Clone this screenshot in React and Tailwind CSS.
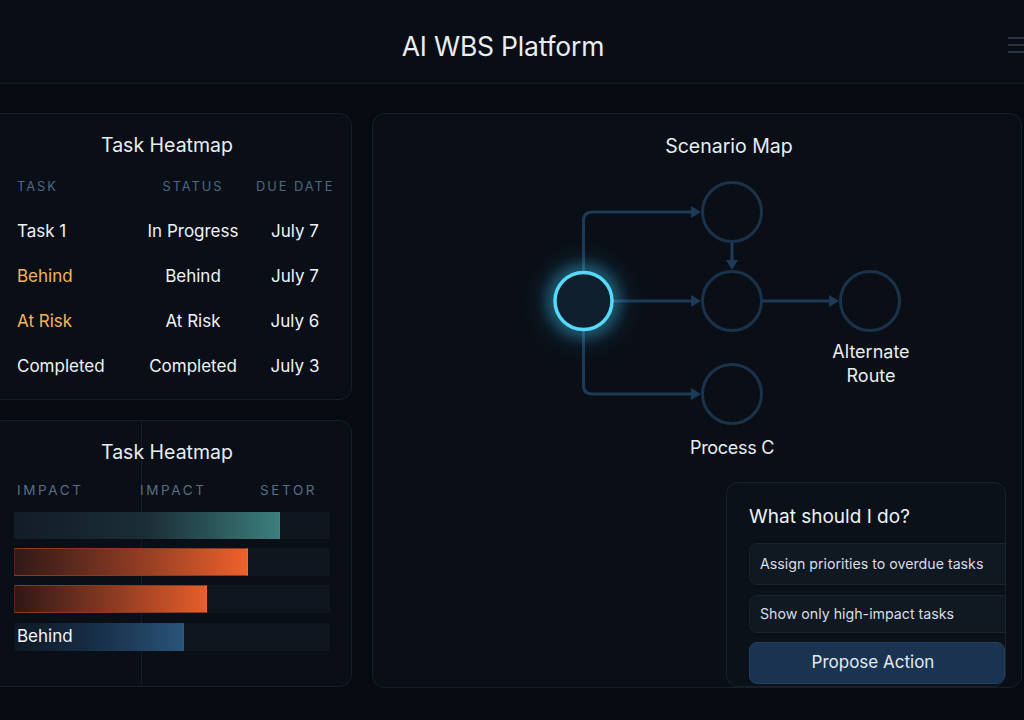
import React from 'react';

// Task table rows
const tasks = [
  { name: 'Task 1', status: 'In Progress', due: 'July 7', warn: false },
  { name: 'Behind', status: 'Behind', due: 'July 7', warn: true },
  { name: 'At Risk', status: 'At Risk', due: 'July 6', warn: true },
  { name: 'Completed', status: 'Completed', due: 'July 3', warn: false },
];

const Arrow = ({ x, y, dir = 'right' }) => {
  // tip located at (x, y)
  const pts =
    dir === 'right'
      ? `${x - 10},${y - 6} ${x - 10},${y + 6} ${x},${y}`
      : `${x - 6},${y - 10} ${x + 6},${y - 10} ${x},${y}`;
  return <polygon points={pts} fill="#1d3a57" />;
};

const ScenarioDiagram = () => (
  <svg width="650" height="322" viewBox="0 0 650 322" className="absolute left-0 top-0">
    <defs>
      <filter id="glow" x="-100%" y="-100%" width="300%" height="300%">
        <feGaussianBlur stdDeviation="8" />
      </filter>
      <radialGradient id="halo" cx="50%" cy="50%" r="50%">
        <stop offset="0%" stopColor="#2aa8d8" stopOpacity="0.35" />
        <stop offset="60%" stopColor="#1a6f99" stopOpacity="0.12" />
        <stop offset="100%" stopColor="#0b1018" stopOpacity="0" />
      </radialGradient>
    </defs>

    {/* edges */}
    <g stroke="#1d3a57" strokeWidth="3" fill="none">
      <path d="M210.5 111 V61 Q210.5 52 219.5 52 H320" />
      <path d="M240 141 H320" />
      <path d="M210.5 171 V225 Q210.5 234 219.5 234 H320" />
      <path d="M359 83 V102" />
      <path d="M390 141 H458" />
    </g>
    <Arrow x={328} y={52} />
    <Arrow x={328} y={141} />
    <Arrow x={328} y={234} />
    <Arrow x={359} y={110} dir="down" />
    <Arrow x={466} y={141} />

    {/* plain nodes */}
    <g stroke="#1b324b" strokeWidth="3" fill="#0a0f17">
      <circle cx="359" cy="52" r="29.5" />
      <circle cx="359" cy="141" r="29.5" />
      <circle cx="497" cy="141" r="29.5" />
      <circle cx="359" cy="234" r="29.5" />
    </g>

    {/* active node */}
    <circle cx="210.5" cy="141" r="66" fill="url(#halo)" />
    <circle cx="210.5" cy="141" r="29" stroke="#3fc8f0" strokeWidth="7" fill="none" filter="url(#glow)" opacity="0.8" />
    <circle cx="210.5" cy="141" r="28.5" fill="#0f1f2e" stroke="#58d9f7" strokeWidth="3.5" />
  </svg>
);

export default function App() {
  return (
    <div className="relative min-h-[720px] w-full overflow-hidden bg-[#060a11] font-[Inter,sans-serif] text-[#e6ebf0]">
      {/* ヘッダー */}
      <header className="relative flex h-[84px] items-center justify-center border-b border-[#131a24] bg-[#090e16] pr-[18px] pt-[10px]">
        <h1 className="text-[26.5px] font-normal tracking-[-0.2px] text-[#e8edf2]">AI WBS Platform</h1>
        <div className="absolute right-[-8px] top-[37px] flex w-[24px] flex-col gap-[5px]">
          <span className="h-[2px] bg-[#2a3340]" />
          <span className="h-[2px] bg-[#2a3340]" />
          <span className="h-[2px] bg-[#2a3340]" />
        </div>
      </header>

      <main className="flex gap-[20px] pt-[29px]">
        {/* 左カラム */}
        <div className="-ml-[10px] flex w-[362px] shrink-0 flex-col gap-[20px]">
          {/* タスク表 */}
          <section className="h-[287px] rounded-xl border border-[#161e29] bg-[#0a0f17] pl-[26px] pr-[22px] pt-[17px]">
            <h2 className="pr-[12px] text-center text-[19.5px] leading-[28px] text-[#e8edf2]">Task Heatmap</h2>
            <div className="mt-[18px] grid grid-cols-[113px_126px_74px] text-[12.8px] leading-[19px] tracking-[2px] text-[#4d6882]">
              <span>TASK</span>
              <span className="text-center">STATUS</span>
              <span className="whitespace-nowrap text-center">DUE DATE</span>
            </div>
            <div className="mt-[23px] flex flex-col gap-[21px]">
              {tasks.map((t) => (
                <div key={t.name} className="grid grid-cols-[113px_126px_74px] text-[17px] leading-[24px]">
                  <span className={t.warn ? 'text-[#f2b45c]' : 'text-[#eef2f6]'}>{t.name}</span>
                  <span className="text-center text-[#eef2f6]">{t.status}</span>
                  <span className="pl-[4px] text-center text-[#eef2f6]">{t.due}</span>
                </div>
              ))}
            </div>
          </section>

          {/* インパクトバー */}
          <section className="relative h-[267px] overflow-hidden rounded-xl border border-[#161e29] bg-[#0a0f17] pl-[23px] pr-[21px] pt-[17px]">
            <div className="absolute bottom-0 left-[150px] top-0 w-px bg-[#141c27]" />
            <h2 className="relative pr-[10px] text-center text-[19.5px] leading-[28px] text-[#e8edf2]">Task Heatmap</h2>
            <div className="relative mt-[14px] grid grid-cols-[123px_120px_1fr] pl-[3px] text-[13.5px] leading-[20px] tracking-[2.6px] text-[#586e84]">
              <span>IMPACT</span>
              <span>IMPACT</span>
              <span>SETOR</span>
            </div>
            <div className="relative mt-[12px] flex flex-col">
              <div className="h-[27px] bg-[#0f161f]">
                <div className="h-full w-[266px] border-r border-[#3a8a86] bg-gradient-to-r from-[#121c27] via-[#1b2e37] to-[#3b7f7c]" />
              </div>
              <div className="mt-[9px] h-[28px] bg-[#0f161f]">
                <div className="h-full w-[234px] border border-[#5a2618] border-r-[#f06a30] border-t-[#8a3a22] border-b-[#8a3a22] bg-gradient-to-r from-[#321916] via-[#8a3a22] to-[#ef612b]" />
              </div>
              <div className="mt-[9px] h-[28px] bg-[#0f161f]">
                <div className="h-full w-[193px] border border-[#5a2618] border-r-[#ee6830] border-t-[#8a3a22] border-b-[#8a3a22] bg-gradient-to-r from-[#301815] via-[#8a3a22] to-[#e65e2a]" />
              </div>
              <div className="mt-[10px] h-[28px] bg-[#0f161f]">
                <div className="flex h-full w-[170px] items-center border-r border-[#2f5a7e] bg-gradient-to-r from-[#0e1823] via-[#18304a] to-[#2a5478] pl-[3px] text-[17px] text-[#f2f5f8]">
                  Behind
                </div>
              </div>
            </div>
          </section>
        </div>

        {/* シナリオマップ */}
        <section className="flex h-[575px] w-[650px] shrink-0 flex-col rounded-xl border border-[#161e29] bg-[#0a0f17] pt-[18px]">
          <h2 className="pl-[64px] text-center text-[19.5px] leading-[28px] text-[#e8edf2]">Scenario Map</h2>
          <div className="relative h-[322px]">
            <ScenarioDiagram />
            <div className="absolute left-[438px] top-[180px] w-[120px] text-center text-[18px] leading-[24px] text-[#e8edf2]">
              Alternate
              <br />
              Route
            </div>
            <div className="absolute left-[299px] top-[276px] w-[120px] text-center text-[18px] leading-[24px] tracking-[-0.3px] text-[#e8edf2]">
              Process C
            </div>
          </div>

          {/* アシスタント */}
          <div className="mr-[15px] flex w-[280px] self-end flex-col overflow-hidden rounded-xl border border-[#19212c] bg-[#0b1119] pb-[2px] pl-[22px] pt-[20px]">
            <h3 className="text-[19px] leading-[28px] text-[#eef2f6]">What should I do?</h3>
            <div className="mt-[12px] flex h-[42px] w-[300px] shrink-0 items-center rounded-lg border border-[#19222e] bg-[#101822] pl-[10px] text-[14.2px] text-[#d8dee6]">
              Assign priorities to overdue tasks
            </div>
            <div className="mt-[10px] flex h-[38px] w-[300px] shrink-0 items-center rounded-lg border border-[#19222e] bg-[#101822] pl-[10px] text-[14.2px] text-[#d8dee6]">
              Show only high-impact tasks
            </div>
            <button className="mt-[9px] h-[42px] w-[256px] shrink-0 rounded-lg border border-[#22405d] bg-[#1a3350] pr-[8px] text-center text-[17px] text-[#e4eaf0]">
              Propose Action
            </button>
          </div>
        </section>
      </main>
    </div>
  );
}
